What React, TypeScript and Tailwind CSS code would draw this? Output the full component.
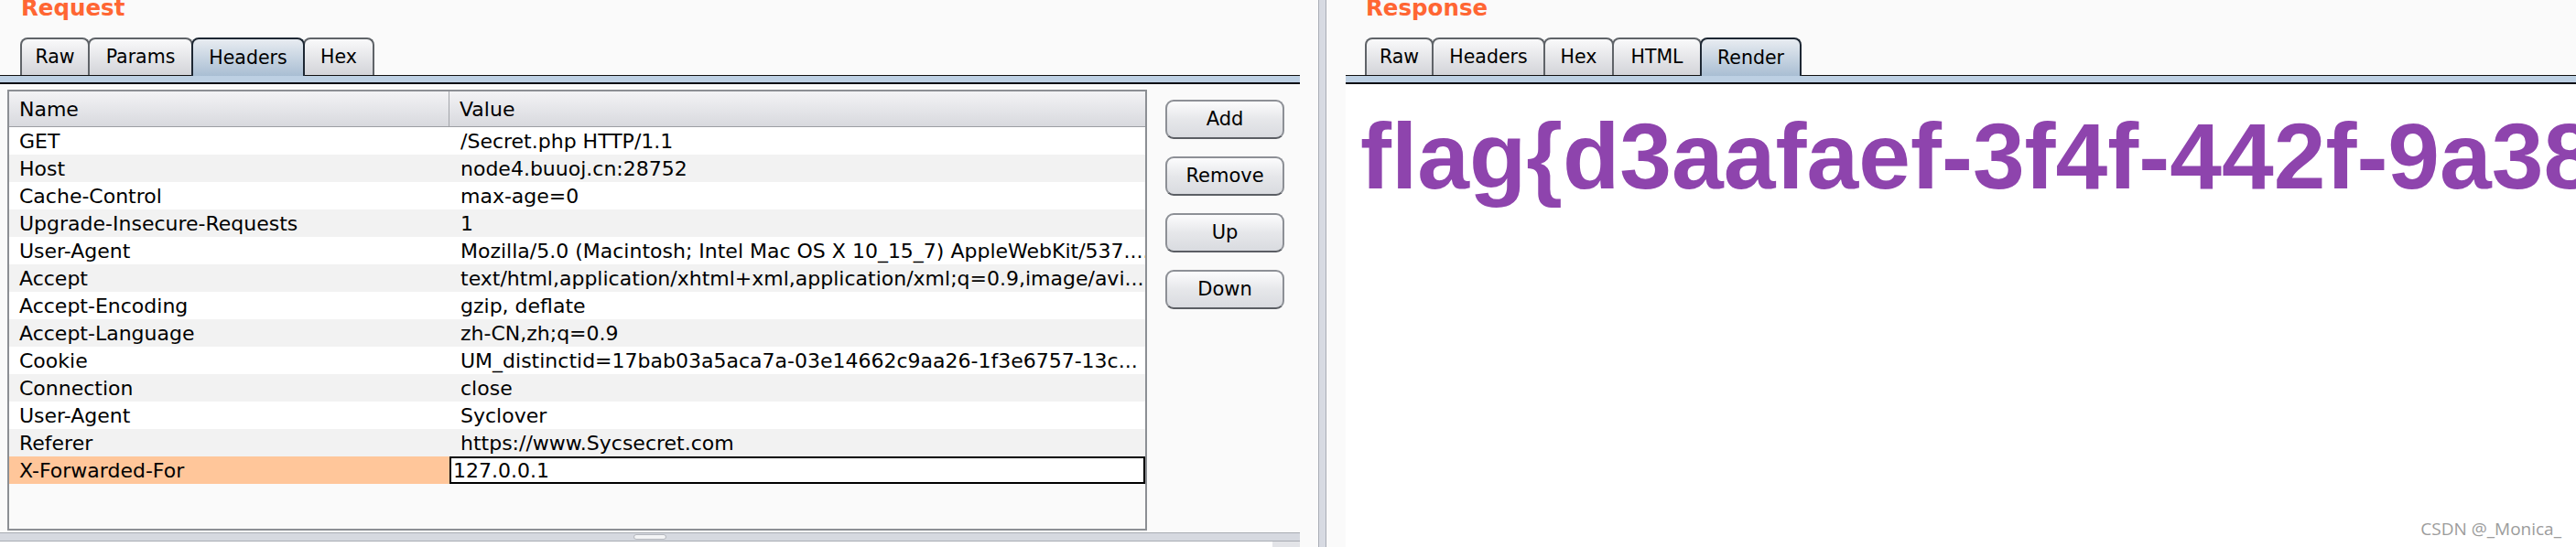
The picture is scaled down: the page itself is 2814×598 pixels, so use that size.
import React from 'react';

interface TabDef {
  label: string;
  width: string;
}

const requestTabs: TabDef[] = [
  { label: 'Raw', width: 'w-[76px]' },
  { label: 'Params', width: 'w-[115px]' },
  { label: 'Headers', width: 'w-[124px]' },
  { label: 'Hex', width: 'w-[78px]' },
];

const responseTabs: TabDef[] = [
  { label: 'Raw', width: 'w-[75px]' },
  { label: 'Headers', width: 'w-[124px]' },
  { label: 'Hex', width: 'w-[77px]' },
  { label: 'HTML', width: 'w-[98px]' },
  { label: 'Render', width: 'w-[111px]' },
];

const headers: [string, string][] = [
  ['GET', '/Secret.php HTTP/1.1'],
  ['Host', 'node4.buuoj.cn:28752'],
  ['Cache-Control', 'max-age=0'],
  ['Upgrade-Insecure-Requests', '1'],
  ['User-Agent', 'Mozilla/5.0 (Macintosh; Intel Mac OS X 10_15_7) AppleWebKit/537....'],
  ['Accept', 'text/html,application/xhtml+xml,application/xml;q=0.9,image/avi...'],
  ['Accept-Encoding', 'gzip, deflate'],
  ['Accept-Language', 'zh-CN,zh;q=0.9'],
  ['Cookie', 'UM_distinctid=17bab03a5aca7a-03e14662c9aa26-1f3e6757-13c...'],
  ['Connection', 'close'],
  ['User-Agent', 'Syclover'],
  ['Referer', 'https://www.Sycsecret.com'],
];

const Tabs = ({ tabs, active }: { tabs: TabDef[]; active: string }) => (
  <div className="flex items-end h-[41px]">
    {tabs.map((t, i) => {
      const on = t.label === active;
      return (
        <div
          key={t.label}
          className={`relative flex items-center justify-center rounded-t-[8px] border-2 border-b-0 text-[20.5px] text-black ${t.width} ${i > 0 ? 'ml-[-2px]' : ''} ${
            on
              ? 'z-10 h-[42px] mb-[-1px] border-[#1d2733] bg-gradient-to-b from-[#e8ecf1] to-[#a9bed3]'
              : 'h-[41px] border-[#5f6368] bg-gradient-to-b from-[#f9f9fa] to-[#d3d4d9]'
          }`}
        >
          {t.label}
        </div>
      );
    })}
  </div>
);

const BlueBar = () => (
  <div className="h-[10px] border-t border-b-2 border-t-[#111111] border-b-[#0b0b14] bg-[#bdd0e3]" />
);

// the window title sits partly above the top edge of the capture
const Title = ({ text }: { text: string }) => (
  <div className="flex h-[41px] items-start">
    <div className="mt-[-3px] text-[24.5px] leading-none font-bold text-[#ff6633]">{text}</div>
  </div>
);

const SideButton = ({ label }: { label: string }) => (
  <button className="h-[43px] w-[130px] rounded-[9px] border-2 border-[#8d9096] border-b-[#5b5e64] bg-gradient-to-b from-[#fcfcfd] via-[#e6e7ea] to-[#d9dbe0] text-[21px] text-black">
    {label}
  </button>
);

export default function App() {
  return (
    <div className="flex h-[598px] w-[2814px] overflow-hidden bg-[#fafafa] font-['DejaVu_Sans',sans-serif]">
      {/* Request */}
      <div className="flex w-[1420px] shrink-0 flex-col">
        <div className="pl-[23px]">
          <Title text="Request" />
        </div>
        <div className="pl-[22px]">
          <Tabs tabs={requestTabs} active="Headers" />
        </div>
        <BlueBar />

        <div className="flex h-[490px] pt-[6px]">
          <div className="ml-[8px] flex h-[482px] w-[1245px] flex-col overflow-hidden border-2 border-[#8c8f94] bg-[#fafafa] text-[22px] text-black">
            <div className="flex h-[39px] shrink-0 border-b border-[#9c9ea3] bg-gradient-to-b from-[#f3f3f5] to-[#d8d9de]">
              <div className="flex w-[481px] items-center border-r border-[#a3a5aa] pl-[11px]">Name</div>
              <div className="flex flex-1 items-center pl-[11px]">Value</div>
            </div>
            {headers.map(([name, value], i) => (
              <div key={i} className={`flex h-[30px] shrink-0 items-center ${i % 2 === 0 ? 'bg-white' : 'bg-[#f2f2f2]'}`}>
                <div className="w-[481px] shrink-0 pl-[11px] whitespace-nowrap">{name}</div>
                <div className="min-w-0 flex-1 overflow-hidden pl-[12px] whitespace-nowrap">{value}</div>
              </div>
            ))}
            <div className="flex h-[30px] shrink-0">
              <div className="flex w-[481px] shrink-0 items-center bg-[#ffc69a] pl-[11px]">X-Forwarded-For</div>
              <div className="flex flex-1 items-center border-2 border-black bg-white pl-[2px]">127.0.0.1</div>
            </div>
          </div>

          <div className="ml-[20px] mt-[11px] flex flex-col gap-[19px]">
            <SideButton label="Add" />
            <SideButton label="Remove" />
            <SideButton label="Up" />
            <SideButton label="Down" />
          </div>
        </div>

        {/* horizontal split handle */}
        <div className="flex h-[10px] items-center justify-center border-y border-[#a8acb3] bg-[#d6d9e0]">
          <div className="h-[6px] w-[36px] rounded-full border border-[#b3b6bc] bg-[#f3f4f6]" />
        </div>
        <div className="flex h-[6px] justify-end bg-white">
          <div className="w-[30px] bg-[#e3e4e8]" />
        </div>
      </div>

      {/* vertical divider */}
      <div className="ml-[20px] h-full w-[9px] shrink-0 border-x border-[#a9adb6] bg-[#d7dae2]" />

      {/* Response */}
      <div className="ml-[21px] flex min-w-0 flex-1 flex-col">
        <div className="pl-[22px]">
          <Title text="Response" />
        </div>
        <div className="pl-[21px]">
          <Tabs tabs={responseTabs} active="Render" />
        </div>
        <BlueBar />
        <div className="relative flex-1 overflow-hidden bg-white">
          <div className="pl-[16px] pt-[28px] font-['Liberation_Sans',Arial,sans-serif] text-[102px] leading-none font-bold whitespace-nowrap text-[#8e44ad]">
            flag{'{'}d3aafaef-3f4f-442f-9a38
          </div>
          <div className="absolute bottom-[10px] right-[16px] font-['Open_Sans',sans-serif] text-[19px] leading-none text-[#9c9c9c]">
            CSDN @_Monica_
          </div>
        </div>
      </div>
    </div>
  );
}
